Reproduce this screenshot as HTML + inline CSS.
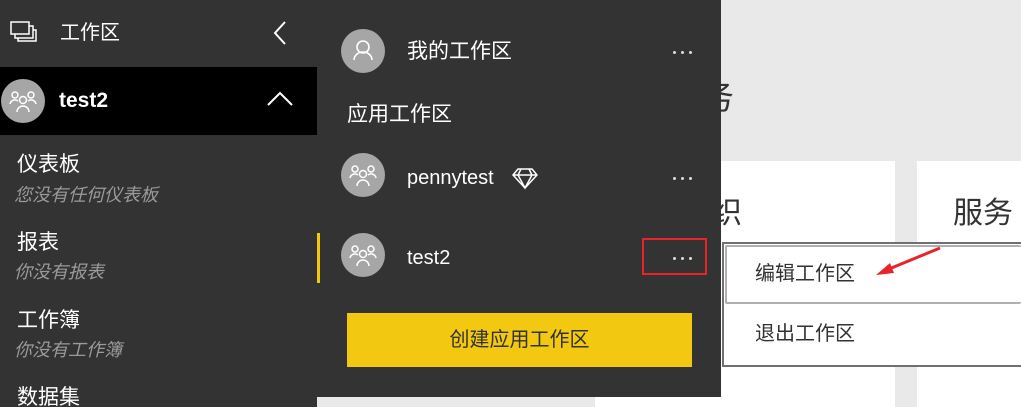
<!DOCTYPE html><html><head><meta charset="utf-8"><style>
*{margin:0;padding:0;box-sizing:border-box}
html{overflow:hidden;width:1021px;height:407px}
body{width:1021px;height:407px;overflow:hidden;background:#e9e9e9;position:relative;font-family:"Liberation Sans","Noto Sans CJK SC",sans-serif}
.a{position:absolute;line-height:1.2}
.av{position:absolute;width:44px;height:44px;border-radius:50%;background:#a6a6a6}
.av svg{position:absolute;left:0;top:0}
.sub{color:#9a9a9a;font-style:italic;font-size:18px}
.it{color:#fff;font-size:21px}
.dots{position:absolute;width:22px;height:4px}
.dots i{position:absolute;top:0;width:3px;height:3px;background:#ddd;border-radius:50%}
</style></head><body>
<div class="a" style="left:595px;top:161px;width:300px;height:246px;background:#fff"></div>
<div class="a" style="left:917px;top:161px;width:104px;height:246px;background:#fff"></div>
<div class="a" style="left:700px;top:78px;font-size:34px;color:#333">务</div>
<div class="a" style="left:712px;top:196px;font-size:30px;color:#333">织</div>
<div class="a" style="left:953px;top:196px;font-size:30px;color:#333">服务</div>
<div class="a" style="left:722px;top:242px;width:299px;height:125px;background:#fff;border:2px solid #707070;border-right:none"></div>
<div class="a" style="left:725px;top:245px;width:296px;height:59px;border:2px solid #b0b0b0;border-right:none;border-radius:2px"></div>
<div class="a" style="left:755px;top:262px;font-size:20px;color:#333">编辑工作区</div>
<div class="a" style="left:755px;top:322px;font-size:20px;color:#333">退出工作区</div>
<svg class="a" style="left:870px;top:240px" width="80" height="40"><line x1="70" y1="8" x2="14" y2="31" stroke="#e8242b" stroke-width="3"/><polygon points="6,35 20,23 24,33" fill="#e8242b"/></svg>
<div class="a" style="left:317px;top:0;width:404px;height:397px;background:#333"></div>
<div class="av" style="left:341px;top:29px"><svg width="44" height="44"><circle cx="22" cy="18" r="6" fill="none" stroke="#fff" stroke-width="1.6"/><path d="M13 31a9 8 0 0 1 18 0" fill="none" stroke="#fff" stroke-width="1.6"/></svg></div>
<div class="a it" style="left:407px;top:39px">我的工作区</div>
<div class="a it" style="left:347px;top:102px">应用工作区</div>
<div class="av" style="left:341px;top:153px"><svg width="44" height="44"><g fill="none" stroke="#fff" stroke-width="1.5"><circle cx="14" cy="16" r="3"/><circle cx="30" cy="16" r="3"/><circle cx="22" cy="21" r="3.5"/><path d="M9 25a5 5 0 0 1 8-3M35 25a5 5 0 0 0-8-3M16 33a6 6 0 0 1 12 0"/></g></svg></div>
<div class="a it" style="left:407px;top:166px;font-size:20px">pennytest</div>
<svg class="a" style="left:512px;top:166px" width="26" height="24"><g fill="none" stroke="#fff" stroke-width="1.5"><path d="M6 3h14l5 6-12 13L1 9z M1 9h24 M9 3l-3 6 7 13 7-13-3-6"/></g></svg>
<div class="dots" style="left:673px;top:51px"><i style="left:0"></i><i style="left:8px"></i><i style="left:16px"></i></div>
<div class="dots" style="left:673px;top:177px"><i style="left:0"></i><i style="left:8px"></i><i style="left:16px"></i></div>
<div class="a" style="left:317px;top:233px;width:3px;height:50px;background:#f2c811"></div>
<div class="av" style="left:341px;top:233px"><svg width="44" height="44"><g fill="none" stroke="#fff" stroke-width="1.5"><circle cx="14" cy="16" r="3"/><circle cx="30" cy="16" r="3"/><circle cx="22" cy="21" r="3.5"/><path d="M9 25a5 5 0 0 1 8-3M35 25a5 5 0 0 0-8-3M16 33a6 6 0 0 1 12 0"/></g></svg></div>
<div class="a it" style="left:407px;top:246px;font-size:20px">test2</div>
<div class="a" style="left:642px;top:238px;width:65px;height:37px;border:2px solid #e8242b"></div>
<div class="dots" style="left:673px;top:257px"><i style="left:0"></i><i style="left:8px"></i><i style="left:16px"></i></div>
<div class="a" style="left:347px;top:313px;width:345px;height:54px;background:#f2c811;color:#333;font-size:20px;text-align:center;line-height:54px">创建应用工作区</div>
<div class="a" style="left:0;top:0;width:317px;height:407px;background:#333"></div>
<svg class="a" style="left:9px;top:20px" width="30" height="26"><g fill="none" stroke="#fff" stroke-width="1.5"><rect x="2" y="2" width="18" height="12"/><path d="M20 6h4v12H6v-4M24 10h3v11H9v-3"/></g></svg>
<div class="a it" style="left:60px;top:21px;font-size:20px">工作区</div>
<svg class="a" style="left:270px;top:20px" width="20" height="26"><path d="M15 2 5 13l10 11" fill="none" stroke="#fff" stroke-width="2"/></svg>
<div class="a" style="left:0;top:67px;width:317px;height:68px;background:#000"></div>
<div class="av" style="left:1px;top:79px"><svg width="44" height="44"><g fill="none" stroke="#fff" stroke-width="1.5"><circle cx="14" cy="16" r="3"/><circle cx="30" cy="16" r="3"/><circle cx="22" cy="21" r="3.5"/><path d="M9 25a5 5 0 0 1 8-3M35 25a5 5 0 0 0-8-3M16 33a6 6 0 0 1 12 0"/></g></svg></div>
<div class="a it" style="left:59px;top:88px;font-size:21px;font-weight:bold">test2</div>
<svg class="a" style="left:266px;top:90px" width="28" height="18"><path d="M2 15 14 3l12 12" fill="none" stroke="#fff" stroke-width="2"/></svg>
<div class="a it" style="left:17px;top:152px">仪表板</div>
<div class="a sub" style="left:14px;top:185px">您没有任何仪表板</div>
<div class="a it" style="left:17px;top:230px">报表</div>
<div class="a sub" style="left:14px;top:262px">你没有报表</div>
<div class="a it" style="left:17px;top:308px">工作簿</div>
<div class="a sub" style="left:14px;top:340px">你没有工作簿</div>
<div class="a it" style="left:17px;top:385px">数据集</div>
</body></html>
